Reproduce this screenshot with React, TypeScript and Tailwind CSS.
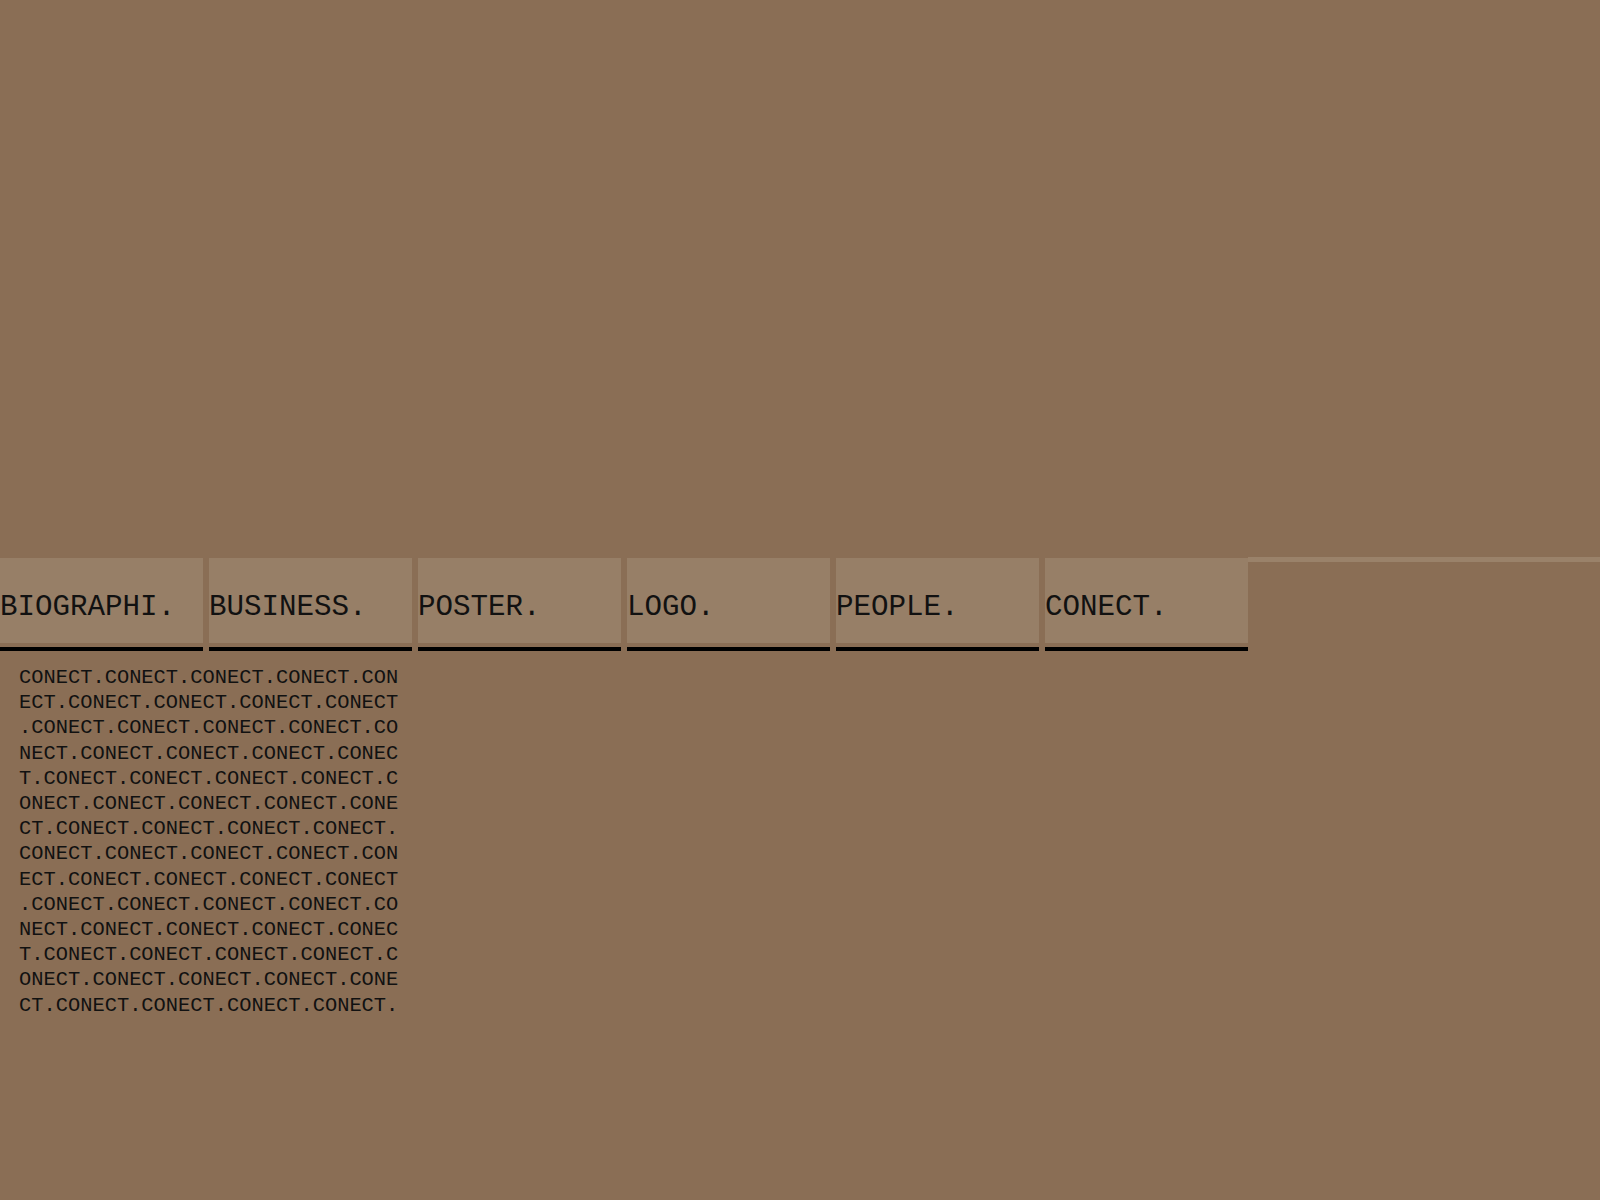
import React from "react";

const tabs = ["BIOGRAPHI.", "BUSINESS.", "POSTER.", "LOGO.", "PEOPLE.", "CONECT."];

const App = () => {
  const body = "CONECT.".repeat(62);

  return (
    <div className="min-h-screen w-full bg-[#8a6e55] font-['Liberation_Mono',monospace] text-[#111]">
      <div className="h-[557px]" />

      <nav className="flex">
        <ul className="flex gap-[6px] mt-px">
          {tabs.map((t) => (
            <li key={t} className="w-[203px] border-b-4 border-black">
              <div className="h-[85px] mb-1 bg-[#977f67] pt-[35px] text-[29.2px] leading-none">
                {t}
              </div>
            </li>
          ))}
        </ul>
        <div className="flex-1 h-[5px] bg-[#9a826a]" />
      </nav>

      <p className="ml-[19px] mt-[14px] w-[385px] break-all [line-break:anywhere] text-[20.4px] leading-[25.2px]">
        {body}
      </p>
    </div>
  );
};

export default App;
